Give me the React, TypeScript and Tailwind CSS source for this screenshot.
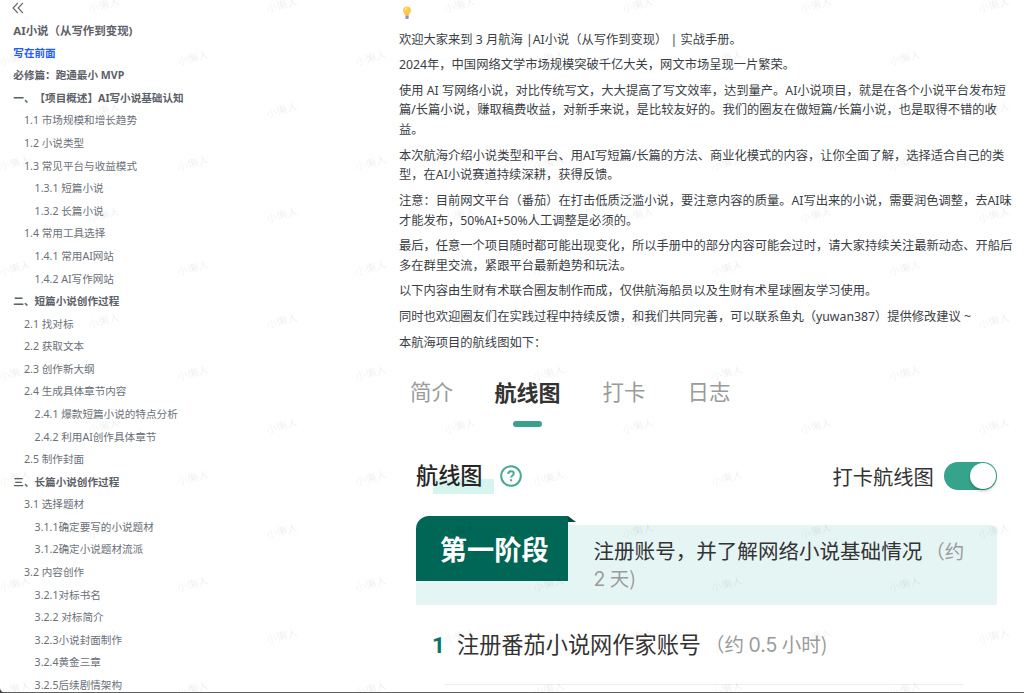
import React from "react";

type Item = { text: string; level: 0 | 1 | 2; active?: boolean };

const outline: Item[] = [
  { text: "写在前面", level: 0, active: true },
  { text: "必修篇：跑通最小 MVP", level: 0 },
  { text: "一、【项目概述】AI写小说基础认知", level: 0 },
  { text: "1.1 市场规模和增长趋势", level: 1 },
  { text: "1.2 小说类型", level: 1 },
  { text: "1.3 常见平台与收益模式", level: 1 },
  { text: "1.3.1 短篇小说", level: 2 },
  { text: "1.3.2 长篇小说", level: 2 },
  { text: "1.4 常用工具选择", level: 1 },
  { text: "1.4.1 常用AI网站", level: 2 },
  { text: "1.4.2 AI写作网站", level: 2 },
  { text: "二、短篇小说创作过程", level: 0 },
  { text: "2.1 找对标", level: 1 },
  { text: "2.2 获取文本", level: 1 },
  { text: "2.3 创作新大纲", level: 1 },
  { text: "2.4 生成具体章节内容", level: 1 },
  { text: "2.4.1 爆款短篇小说的特点分析", level: 2 },
  { text: "2.4.2 利用AI创作具体章节", level: 2 },
  { text: "2.5 制作封面", level: 1 },
  { text: "三、长篇小说创作过程", level: 0 },
  { text: "3.1 选择题材", level: 1 },
  { text: "3.1.1确定要写的小说题材", level: 2 },
  { text: "3.1.2确定小说题材流派", level: 2 },
  { text: "3.2 内容创作", level: 1 },
  { text: "3.2.1对标书名", level: 2 },
  { text: "3.2.2 对标简介", level: 2 },
  { text: "3.2.3小说封面制作", level: 2 },
  { text: "3.2.4黄金三章", level: 2 },
  { text: "3.2.5后续剧情架构", level: 2 },
];

const levelClass = {
  0: "pl-[13.3px] font-bold text-[#5c6067]",
  1: "pl-[24px] text-[#6b7078]",
  2: "pl-[34.6px] text-[#6b7078]",
};

const paragraphs: string[][] = [
  ["欢迎大家来到 3 月航海 |AI小说（从写作到变现） | 实战手册。"],
  ["2024年，中国网络文学市场规模突破千亿大关，网文市场呈现一片繁荣。"],
  [
    "使用 AI 写网络小说，对比传统写文，大大提高了写文效率，达到量产。AI小说项目，就是在各个小说平台发布短",
    "篇/长篇小说，赚取稿费收益，对新手来说，是比较友好的。我们的圈友在做短篇/长篇小说，也是取得不错的收",
    "益。",
  ],
  [
    "本次航海介绍小说类型和平台、用AI写短篇/长篇的方法、商业化模式的内容，让你全面了解，选择适合自己的类",
    "型，在AI小说赛道持续深耕，获得反馈。",
  ],
  [
    "注意：目前网文平台（番茄）在打击低质泛滥小说，要注意内容的质量。AI写出来的小说，需要润色调整，去AI味",
    "才能发布，50%AI+50%人工调整是必须的。",
  ],
  [
    "最后，任意一个项目随时都可能出现变化，所以手册中的部分内容可能会过时，请大家持续关注最新动态、开船后",
    "多在群里交流，紧跟平台最新趋势和玩法。",
  ],
  ["以下内容由生财有术联合圈友制作而成，仅供航海船员以及生财有术星球圈友学习使用。"],
  ["同时也欢迎圈友们在实践过程中持续反馈，和我们共同完善，可以联系鱼丸（yuwan387）提供修改建议 ~"],
  ["本航海项目的航线图如下："],
];

const marks: { x: number; y: number }[] = [];
for (let r = 0; r < 14; r++) {
  for (let c = 0; c < 6; c++) {
    marks.push({ x: (r % 2 ? 15.3 : 104.3) + c * 177.9, y: 5 + r * 52.6 });
  }
}

function Watermark() {
  return (
    <div className="pointer-events-none absolute inset-0 overflow-hidden" aria-hidden="true">
      {marks.map((m, i) => (
        <span
          key={i}
          className="absolute -translate-x-1/2 -translate-y-1/2 -rotate-[15deg] text-[10.6px] leading-none font-medium whitespace-nowrap text-black/[0.065]"
          style={{ left: m.x, top: m.y }}
        >
          小懒人
        </span>
      ))}
    </div>
  );
}

function Bulb() {
  return (
    <svg className="block h-[14px] w-[10px]" viewBox="0 0 10 14">
      <path d="M5 .6C2.600.6 1 2.300 1 4.400c0 1.800 1.100 2.700 1.800 4.100.2.500.3.800.3 1.100h3.800c0-.3.1-.6.3-1.100C7.900 7.100 9 6.200 9 4.400 9 2.300 7.400.6 5 .6Z" fill="#fdc84c" />
      <path d="M3.200 2.200c.9-.8 2-.7 2.300-.3.2.5-.7.7-1.400 1.400-.6.600-.8 1.500-1.300 1.400-.6-.2-.5-1.700.4-2.500Z" fill="#ffe9a0" />
      <path d="M5 7.500v2" fill="none" stroke="#f5a93c" strokeWidth="1" />
      <path d="M3.500 9.600h3.100v2.600c0 .6-.5.9-1 .9H4.500c-.5 0-1-.3-1-.9Z" fill="#a58fc0" />
      <path d="M3.500 11h3.100" stroke="#8f7bb0" strokeWidth=".6" />
    </svg>
  );
}

function Sidebar() {
  return (
    <nav className="w-[399px] shrink-0 text-[10.6px]">
      <div className="flex h-[19px] items-start pt-[2px] pl-[12px]">
        <svg className="h-[12px] w-[12px]" viewBox="0 0 12 12" fill="none" stroke="#63676e" strokeWidth="1.100">
          <path d="M5.800 1L1.100 6l4.700 5M10.900 1L6.200 6l4.700 5" />
        </svg>
      </div>
      <div className="mb-[1px] flex h-[22.400px] items-center pl-[13.300px] text-[11.450px] font-bold whitespace-nowrap text-[#5c6067]">
        AI小说（从写作到变现)
      </div>
      {outline.map((it) => (
        <div
          key={it.text}
          className={`flex h-[22.590px] items-center whitespace-nowrap ${levelClass[it.level]} ${it.active ? "text-[#1f5bff]!" : ""}`}
        >
          {it.text}
        </div>
      ))}
    </nav>
  );
}

function RoutePanel() {
  return (
    <section className="font-['Noto_Sans_CJK_SC',sans-serif] whitespace-nowrap">
      <div className="flex pt-[16.600px] text-[21.500px] leading-[32px] text-[#9b9b9b]">
        <span className="ml-[11px] w-[84.500px]">简介</span>
        <span className="relative w-[108px] text-[22px] font-bold text-[#333]">
          航线图
          <i className="absolute top-[46.800px] left-[18.500px] h-[6px] w-[29px] rounded-full bg-[#3aa18e]" />
        </span>
        <span className="w-[85px]">打卡</span>
        <span>日志</span>
      </div>

      <div className="mt-[53.400px] flex h-[32px] items-center pl-[17px]">
        <span className="relative text-[22.200px] leading-[32px] font-medium text-[#262626]">
          <i className="absolute top-[19px] left-[17px] h-[15px] w-[61px] bg-[#d7f5ef]" />
          <span className="relative -top-[2px]">航线图</span>
        </span>
        <svg className="ml-[17.400px] h-[22px] w-[22px]" viewBox="0 0 22 22" fill="none" stroke="#4aa896" strokeWidth="2">
          <circle cx="11" cy="11" r="9.800" />
          <path d="M8.300 8.900C8.300 7.300 9.400 6.300 11 6.300s2.800.9 2.800 2.400c0 1.800-2.700 1.900-2.700 3.900" />
          <path d="M11.100 14.200v2.100" />
        </svg>
        <span className="ml-[310.500px] text-[20.300px] leading-[32px] text-[#333]">打卡航线图</span>
        <span className="ml-[10px] flex h-[28px] w-[53px] items-center justify-end rounded-full bg-[#36a48d] pr-px">
          <i className="h-[26px] w-[26px] rounded-full bg-white shadow-[0_2px_3px_rgba(0,0,0,0.25)]" />
        </span>
      </div>

      <div className="mt-[33px] ml-[17px] flex h-[80px] w-[581px] rounded-tr-md bg-[#e5f5f4]">
        <div className="relative -mt-[9px] flex h-[64.500px] w-[151.500px] items-center justify-center rounded-tl-[13px] bg-[#006656] pl-[5px] text-[27.200px] font-bold text-white">
          第一阶段
          <svg className="absolute top-0 left-full h-[6px] w-[8px]" viewBox="0 0 8 6">
            <path d="M0 0L8 6H0Z" fill="#004d40" />
          </svg>
        </div>
        <div className="pt-[12px] pl-[26px] text-[20.550px] leading-[27px] text-[#333]">
          注册账号，并了解网络小说基础情况
          <span className="ml-[3px] text-[19.500px] text-[#9b9b9b]">（约<br /><span className="font-[Inter]">2</span> 天)</span>
        </div>
      </div>

      <div className="ml-[45px] flex h-[80px] w-[520px] items-center border-b border-[#eee] pb-[2px]">
        <span className="-ml-[12px] w-[14px] pt-[5px] font-[Roboto] text-[22.500px] font-bold text-[#0b7564]">1</span>
        <span className="ml-[11px] text-[22.200px] text-[#333]">注册番茄小说网作家账号</span>
        <span className="ml-[4px] pt-[2px] text-[19.500px] text-[#9b9b9b]">（约 <span className="font-[Inter]">0.5</span> 小时)</span>
      </div>
    </section>
  );
}

export default function App() {
  return (
    <div className="relative flex h-[693px] w-[1024px] overflow-hidden bg-white font-['Noto_Sans','Noto_Sans_CJK_SC',sans-serif] [text-spacing-trim:space-all]" lang="zh-CN">
      <Sidebar />
      <main className="w-[625px] shrink-0">
        <div className="flex h-[29.500px] pt-[6px] pl-[3px]">
          <Bulb />
        </div>
        {paragraphs.map((lines, i) => (
          <div key={i} className="mb-[5.870px] text-[12.275px] leading-[19.700px] whitespace-nowrap text-[#3a3e45]">
            {lines.map((line) => (
              <p key={line}>{line}</p>
            ))}
          </div>
        ))}
        <RoutePanel />
      </main>
      <Watermark />
      <div className="absolute bottom-0 left-0 h-px w-full bg-[#606060]" />
      <svg className="absolute bottom-0 left-0 h-[5px] w-[5px]" viewBox="0 0 5 5">
        <path d="M0 0C.4 2.800 2 4.400 5 5H0Z" fill="#444" />
      </svg>
    </div>
  );
}
